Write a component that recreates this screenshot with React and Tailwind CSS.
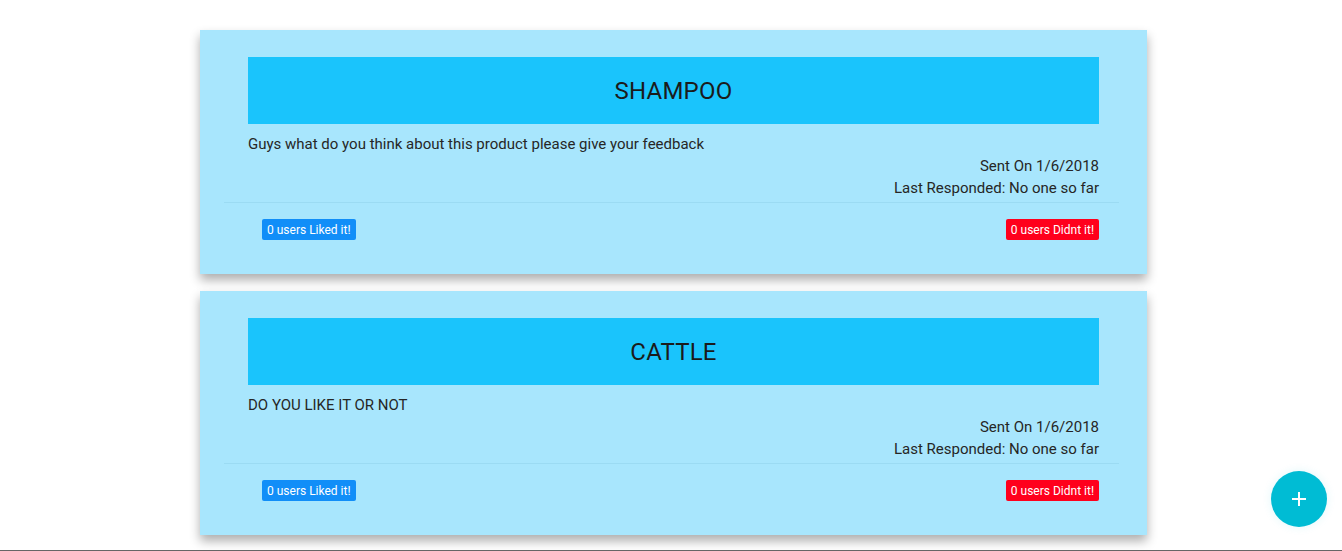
import React from "react";

const posts = [
  {
    title: "SHAMPOO",
    body: "Guys what do you think about this product please give your feedback",
    sent: "1/6/2018",
  },
  {
    title: "CATTLE",
    body: "DO YOU LIKE IT OR NOT",
    sent: "1/6/2018",
  },
];

function PostCard({ post }) {
  return (
    <div className="w-[947px] bg-[#a8e6fd] shadow-[0_6px_10px_rgba(0,0,0,0.32)] pt-[27px] pb-[34px]">
      <div className="mx-12 h-[67px] bg-[#1ac4fc] flex items-center justify-center text-[24px] tracking-[0.2px] text-[#1b1b1b]">
        {post.title}
      </div>
      <div className="mx-12 mt-[9px] text-[15px] leading-[22px] text-[#262626]">
        <p>{post.body}</p>
        <p className="text-right">Sent On {post.sent}</p>
        <p className="text-right">Last Responded: No one so far</p>
      </div>
      <div className="ml-6 mr-7 mt-[3px] border-t border-[#9bdbf3]" />
      <div className="mx-12 mt-[16px] flex justify-between">
        <span className="ml-[14px] h-[21px] px-[5px] flex items-center rounded-[2px] bg-[#118ef8] text-white text-[12px]">
          0 users Liked it!
        </span>
        <span className="h-[21px] px-[5px] flex items-center rounded-[2px] bg-[#ff001c] text-white text-[12px]">
          0 users Didnt it!
        </span>
      </div>
    </div>
  );
}

export default function App() {
  return (
    <div
      className="relative h-[551px] bg-white border-b border-[#666] overflow-hidden"
      style={{ fontFamily: "Roboto, 'Liberation Sans', sans-serif" }}
    >
      <div className="ml-[200px] pt-[30px] flex flex-col gap-[17px]">
        {posts.map((p) => (
          <PostCard key={p.title} post={p} />
        ))}
      </div>
      <button className="absolute left-[1271px] top-[471px] w-14 h-14 rounded-full bg-[#00bcd4] flex items-center justify-center shadow-[0_0_10px_rgba(0,188,212,0.12)]">
        <svg width="16" height="16" viewBox="0 0 16 16">
          <path d="M8 1v14M1 8h14" stroke="white" strokeWidth="2" />
        </svg>
      </button>
    </div>
  );
}
